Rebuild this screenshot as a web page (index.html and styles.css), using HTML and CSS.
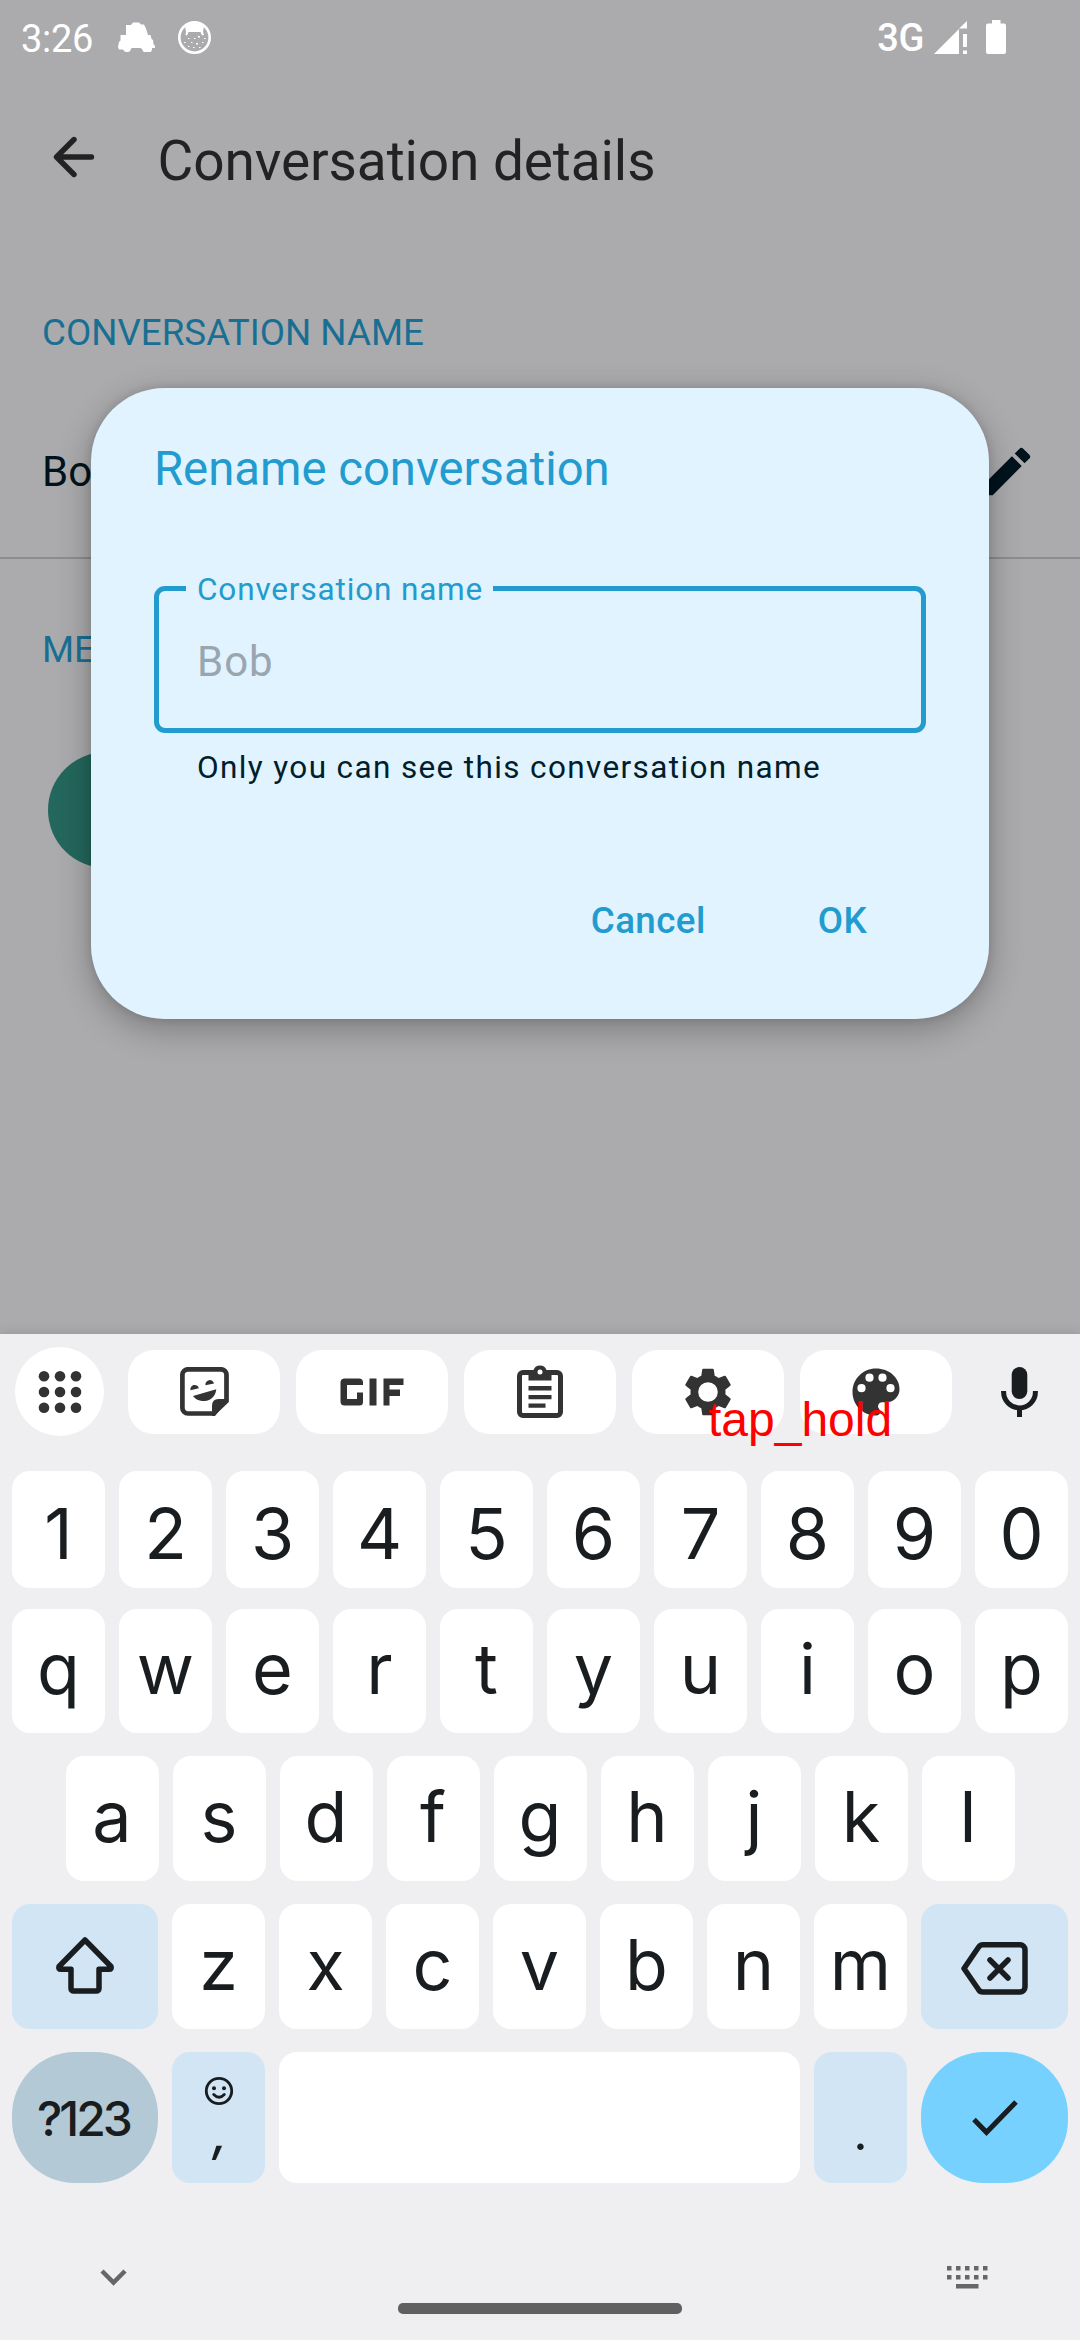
FILE: index.html
```html
<!DOCTYPE html>
<html lang="en">
<head>
<meta charset="utf-8">
<title>Conversation details</title>
<link rel="stylesheet" href="styles.css">
</head>
<body>
<div class="screen">
  <header class="status">
    <span class="clock">3:26</span>
    <svg class="car" viewBox="0 0 37 30"><path d="M8 3h5l2-2.500h6l2 2h3l2 4 2 6.500h2.500l1 4 1.500 1 .5 4 1.500 2v2h-3a4.800 4.800 0 0 1-9.500 1.500L22.500 26h-9L12 29a4.500 4.500 0 0 1-7-1.500H1L0 25l1-5 1.500-1.500V13H8z"/></svg>
    <svg class="face" viewBox="0 0 33 33"><circle cx="16.500" cy="16.500" r="15.200" fill="none" stroke="#fff" stroke-width="2.600"/><path d="M7 5C13 1 20 1 26 5l-1 6 1 3-2 .5-1.500-3.500H10.500L9 14.500 7.500 14 8 11z"/><path d="M10 17h1.500v1H10zM16 17h1.500v1H16zM20 15h2v1.500h-2zM26 17h1.500v1H26zM6 21h1.500v1H6zM13 21h1.500v1H13zM18 22h2v1.500h-2zM24 21h1.500v1H24zM10 25h1.500v1H10zM15 26h1.500v1H15zM21 26h1.500v1H21z"/></svg>
    <span class="network">3G</span>
    <svg class="signal" viewBox="0 0 33 33"><path d="M0 33 25 8v25zM25 7.500 33 0v7.500zM29 13h4v13h-4zM29 29.500h4V33h-4z"/></svg>
    <svg class="battery" viewBox="0 0 20 34"><path d="M6 0h8.500v3.500H18a2 2 0 0 1 2 2V32a2 2 0 0 1-2 2H2a2 2 0 0 1-2-2V5.500a2 2 0 0 1 2-2h4z"/></svg>
  </header>
  <div class="appbar">
    <svg class="back" viewBox="0 0 42 42"><path d="M38.500 21H4M21 3.500 3.500 21 21 38.500"/></svg>
    <h1>Conversation details</h1>
  </div>
  <main class="details">
    <h2>CONVERSATION NAME</h2>
    <div class="name-row">
      <span>Bo</span>
      <svg class="pencil" viewBox="0 0 24 24"><path d="M3 17.250V21h3.750L17.810 9.940l-3.750-3.750zM20.710 7.040a1 1 0 0 0 0-1.410l-2.340-2.340a1 1 0 0 0-1.410 0l-1.830 1.830 3.750 3.750z"/></svg>
    </div>
    <h2 class="members">ME</h2>
    <div class="avatar"></div>
  </main>

  <section class="dialog">
    <h3>Rename conversation</h3>
    <div class="field">
      <span class="label">Conversation name</span>
      <span class="hint">Bob</span>
    </div>
    <p class="helper">Only you can see this conversation name</p>
    <div class="actions"><span>Cancel</span><span>OK</span></div>
  </section>

  <section class="keyboard">
    <div class="toolbar">
      <div class="apps">
        <svg viewBox="0 0 44 44"><g><circle cx="6" cy="6.300" r="5.300"/><circle cx="22" cy="6.300" r="5.300"/><circle cx="38" cy="6.300" r="5.300"/><circle cx="6" cy="22" r="5.300"/><circle cx="22" cy="22" r="5.300"/><circle cx="38" cy="22" r="5.300"/><circle cx="6" cy="37.700" r="5.300"/><circle cx="22" cy="37.700" r="5.300"/><circle cx="38" cy="37.700" r="5.300"/></g></svg>
      </div>
      <div class="pill"><svg width="49" height="49" viewBox="0 0 49 49"><path d="M8 2.300h33a5.500 5.500 0 0 1 5.500 5.500V34L33.500 46.500H8A5.500 5.500 0 0 1 2.400 41V7.800A5.500 5.500 0 0 1 8 2.300z" fill="none" stroke="#333" stroke-width="4.700"/><path d="M48.500 32h-10q-6.500 0-6.500 7v10h3z"/><path d="M10.500 23.200a4.200 4.200 0 1 1 8.300-2zM25.500 18.300a4.300 4.300 0 1 1 8.500-1.700zM13 29l23.300-6.700C35.500 29 31 34 24.500 34 19 34 15 32 13 29z"/></svg></div>
      <div class="pill"><svg width="64" height="28" viewBox="0 0 64 28"><path d="M4 .5h15a4 4 0 0 1 4 4V7H7v14h10v-6.500h6V24a3.500 3.500 0 0 1-3.500 3.500h-15A4 4 0 0 1 .5 23.500v-19A4 4 0 0 1 4 .5zM29.500.5h7v27h-7zM43.500.5h20V7h-14v4.500h10.500v6.500H49.500v9.500h-6z"/></svg></div>
      <div class="pill clipboard"><svg width="46" height="54" viewBox="0 0 46 54"><rect x="2.500" y="8.500" width="41" height="43" rx="3.500" fill="none" stroke="#333" stroke-width="5"/><path d="M11.500 6h5a7 7 0 0 1 13 0h5v10.500h-23z"/><circle cx="23" cy="8" r="2.500" fill="#fff"/><path d="M11.500 22h23v4.400h-23zM11.500 31h23v4.200h-23zM11.500 39.500h17v4.300h-17z"/></svg></div>
      <div class="pill"><svg width="56" height="56" viewBox="0 0 24 24"><path fill-rule="evenodd" d="M19.430 12.980c.04-.32.070-.64.070-.98s-.03-.66-.07-.98l2.110-1.650a.5.500 0 0 0 .12-.64l-2-3.460a.5.500 0 0 0-.61-.22l-2.490 1a7.300 7.300 0 0 0-1.690-.98l-.38-2.650A.49.490 0 0 0 14 2h-4a.49.490 0 0 0-.49.420l-.38 2.650c-.61.250-1.170.59-1.690.98l-2.490-1a.49.490 0 0 0-.61.220l-2 3.460a.49.490 0 0 0 .12.640l2.110 1.650c-.04.320-.07.650-.07.980s.03.660.07.980l-2.110 1.650a.5.500 0 0 0-.12.640l2 3.460c.12.220.39.300.61.220l2.490-1c.52.400 1.080.73 1.690.98l.38 2.650c.03.240.24.420.49.420h4c.25 0 .46-.18.490-.42l.38-2.650a7.300 7.300 0 0 0 1.690-.98l2.490 1c.23.090.49 0 .61-.22l2-3.460a.5.500 0 0 0-.12-.64zM12 16.200a4.200 4.200 0 1 1 0-8.400 4.200 4.200 0 0 1 0 8.400z"/></svg></div>
      <div class="pill"><svg width="48" height="48" viewBox="0 0 48 48"><path fill-rule="evenodd" d="M24 .5C11 .5.500 11 .5 24S11 47.500 24 47.500a4 4 0 0 0 4-4c0-1.300-.5-2-1-2.700a4 4 0 0 1 3-6.600h4.700A13 13 0 0 0 47.500 21C47.500 9.500 37 .5 24 .5zM9.500 24.300a4.100 4.100 0 1 1 0-8.200 4.100 4.100 0 0 1 0 8.200zm8-10.500a4.100 4.100 0 1 1 0-8.200 4.100 4.100 0 0 1 0 8.200zm13 0a4.100 4.100 0 1 1 0-8.200 4.100 4.100 0 0 1 0 8.200zm8 10.500a4.100 4.100 0 1 1 0-8.200 4.100 4.100 0 0 1 0 8.200z"/></svg></div>
      <svg class="mic" viewBox="0 0 37 50"><rect x="10.700" y="0" width="15.600" height="32" rx="7.800"/><path d="M2.600 24v1a15.900 15.900 0 0 0 31.800 0v-1M18.500 40v10" fill="none" stroke="#191d1f" stroke-width="5"/></svg>
    </div>
    <span class="gesture">tap_hold</span>
    <div class="row digits"><b>1</b><b>2</b><b>3</b><b>4</b><b>5</b><b>6</b><b>7</b><b>8</b><b>9</b><b>0</b></div>
    <div class="row top"><b>q</b><b>w</b><b>e</b><b>r</b><b>t</b><b>y</b><b>u</b><b>i</b><b>o</b><b>p</b></div>
    <div class="row home"><b>a</b><b>s</b><b>d</b><b>f</b><b>g</b><b>h</b><b>j</b><b>k</b><b>l</b></div>
    <div class="row lower">
      <b class="mod"><svg class="shift" viewBox="0 0 60 58"><path d="M30 4 56 30.500Q57 33.300 54 33.300H44V52.500a2.500 2.500 0 0 1-2.500 2.500h-23a2.500 2.500 0 0 1-2.500-2.500V33.300H6Q3 33.300 4 30.500z"/></svg></b>
      <b>z</b><b>x</b><b>c</b><b>v</b><b>b</b><b>n</b><b>m</b>
      <b class="mod"><svg class="delete" viewBox="0 0 68 53"><path d="M22 2.800H59a5 5 0 0 1 5 5V45a5 5 0 0 1-5 5H22q-3 0-4.500-2.500L3 26.500 17.500 5.300Q19 2.800 22 2.800zM29 18l18 18M47 18 29 36"/></svg></b>
    </div>
    <div class="row bottom">
      <b class="symbols">?123</b>
      <b class="mod comma"><svg viewBox="0 0 30 30"><circle cx="15" cy="15" r="12.700"/><path d="M9.700 18.500q5.300 5.500 10.600 0"/><circle class="eye" cx="10" cy="12.300" r="2"/><circle class="eye" cx="20" cy="12.300" r="2"/></svg><i>,</i></b>
      <b class="space"></b>
      <b class="mod period"><i>.</i></b>
      <b class="enter"><svg viewBox="0 0 46 36"><path d="M2 19.500 14.500 32.300 44 2"/></svg></b>
    </div>
    <div class="nav">
      <svg class="chevron" viewBox="0 0 27 17"><path d="M2 2 13.500 13.500 25 2"/></svg>
      <div class="handle"></div>
      <svg class="switcher" viewBox="0 0 41 23"><path d="M0 0h4.500v4.500H0zM9 0h4.500v4.500H9zM18 0h4.500v4.500H18zM27 0h4.500v4.500H27zM36 0h4.500v4.500H36zM0 9h4.500v4.500H0zM9 9h4.500v4.500H9zM18 9h4.500v4.500H18zM27 9h4.500v4.500H27zM36 9h4.500v4.500H36zM9 18h22.500v4.500H9z"/></svg>
    </div>
  </section>
</div>
</body>
</html>
```
FILE: styles.css
```css
* { box-sizing: border-box; }
body { margin: 0; }
svg { display: block; flex: none; }
h1, h2, h3, p { margin: 0; font-weight: 400; }
.screen {
  position: relative;
  width: 1080px;
  height: 2340px;
  overflow: hidden;
  background: #ababad;
  font-family: Roboto, sans-serif;
  display: flex;
  flex-direction: column;
}

/* Status bar */
.status {
  height: 77px;
  padding: 0 74px 3px 21px;
  display: flex;
  align-items: center;
  color: #fff;
  fill: #fff;
  font-size: 38px;
  line-height: 44px;
}
.clock { width: 97px; padding-top: 4px; letter-spacing: -.3px; }
.car { width: 37px; height: 30px; }
.face { width: 33px; height: 33px; margin-left: 22.500px; }
.network { margin-left: auto; font-weight: 500; padding-top: 2px; letter-spacing: -.4px; }
.signal { width: 33px; height: 33px; margin-left: 10px; }
.battery { width: 20px; height: 34px; margin-left: 19px; }

/* App bar */
.appbar {
  height: 160px;
  padding-left: 53px;
  display: flex;
  align-items: center;
  color: #222;
}
.back { width: 42px; height: 42px; fill: none; stroke: #222; stroke-width: 5.400px; stroke-linecap: round; stroke-linejoin: round; }
.appbar h1 { font-size: 55px; line-height: 64px; padding-top: 8px; margin-left: 62.500px; letter-spacing: -.1px; }

/* Details page */
.details { height: 1097px; padding-top: 76px; }
.details h2 { font-size: 36.750px; line-height: 40px; padding-left: 42px; color: #196f93; }
.name-row {
  height: 206px;
  padding: 33px 42px 0;
  display: flex;
  justify-content: space-between;
  align-items: center;
  border-bottom: 2px solid #8d8d8f;
  color: #00131c;
  font-size: 42px;
}
.pencil { width: 63px; height: 63px; fill: #00131c; }
.details .members { margin-top: 71px; }
.avatar { width: 116px; height: 116px; margin: 82px 0 0 48px; border-radius: 50%; background: #24675c; }

/* Dialog */
.dialog {
  position: absolute;
  left: 91px;
  top: 388px;
  width: 898px;
  height: 631px;
  padding: 52px 63px 0;
  border-radius: 73.500px;
  background: #e0f3ff;
  box-shadow: 0 10px 34px rgba(0, 0, 0, .28), 0 0 10px rgba(0, 0, 0, .12);
  color: #229bce;
}
.dialog h3 { font-size: 47.250px; line-height: 58px; }
.field {
  position: relative;
  height: 147px;
  margin-top: 88px;
  padding: 42px 0 0 38px;
  border: 5px solid #229bce;
  border-radius: 11px;
}
.label {
  position: absolute;
  left: 27px;
  top: -20px;
  width: 307px;
  padding-left: 11px;
  background: #e0f3ff;
  font-size: 31.500px;
  line-height: 38px;
  letter-spacing: .85px;
  white-space: nowrap;
}
.hint { display: block; font-size: 42px; line-height: 58px; letter-spacing: 1px; color: #9aa6af; }
.helper { margin-top: 15px; padding-left: 43px; font-size: 31.500px; line-height: 40px; letter-spacing: 1.370px; color: #001e2b; white-space: nowrap; }
.actions {
  display: flex;
  justify-content: flex-end;
  gap: 112px;
  margin-top: 111px;
  padding-right: 59px;
  font-size: 36.750px;
  line-height: 44px;
  font-weight: 500;
  letter-spacing: .4px;
}

/* Keyboard */
.keyboard {
  position: relative;
  height: 1006px;
  background: #efeff1;
  box-shadow: 0 0 12px rgba(0, 0, 0, .14);
  padding-top: 13px;
  color: #191d1f;
  font-family: Inter, sans-serif;
}
.toolbar { display: flex; align-items: center; height: 89px; margin-bottom: 35px; padding-left: 15px; gap: 16px; fill: #333; }
.apps { width: 89px; height: 89px; margin-right: 8px; border-radius: 50%; background: #fff; display: grid; place-items: center; }
.apps svg { width: 44px; height: 44px; }
.pill { width: 152px; height: 84px; border-radius: 26px; background: #fff; display: grid; place-items: center; }
.clipboard { padding-bottom: 2px; }
.mic { width: 37px; height: 50px; margin-left: 33px; fill: #191d1f; }
.gesture {
  position: absolute;
  left: 708px;
  top: 58px;
  color: #f00;
  font: 48px/55px "Liberation Sans", sans-serif;
}
.row { display: grid; grid-template-columns: repeat(10, 93px); gap: 14px; margin-left: 12px; }
.row b {
  display: flex;
  align-items: center;
  justify-content: center;
  border-radius: 18px;
  background: #fff;
  font-weight: 400;
  font-size: 70px;
  line-height: 84px;
}
.digits { height: 117px; margin-bottom: 21px; }
.digits b { padding-top: 8px; }
.top { height: 124px; margin-bottom: 23px; }
.top b, .home b { padding-bottom: 4px; }
.home { height: 125px; margin: 0 0 23px 65.500px; }
.lower { height: 125px; margin-bottom: 23px; grid-template-columns: 146px repeat(7, 93px) 147px; }
.lower b { padding-bottom: 4px; }
.bottom { height: 131px; grid-template-columns: 146px 93px 521px 93px 147px; }
.row .mod { background: #d2e5f4; }
.shift { width: 60px; height: 58px; }
.delete { width: 68px; height: 53px; margin-top: 8px; }
.shift, .delete { fill: none; stroke: #191d1f; stroke-width: 5.500px; stroke-linecap: round; stroke-linejoin: round; }
.row .symbols { border-radius: 63px; background: #b4c9d6; font-size: 48px; font-weight: 500; letter-spacing: -3px; padding: 3px 3px 0 0; }
.row .comma, .row .period { flex-direction: column; justify-content: flex-start; }
.comma svg { width: 30px; height: 30px; margin-top: 24px; fill: none; stroke: #191d1f; stroke-width: 2.800px; stroke-linecap: round; }
.comma .eye { fill: #191d1f; stroke: none; }
.row i { font-style: normal; font-size: 50px; line-height: 60px; }
.row .comma i { margin-top: -3px; padding-left: 3px; font-style: italic; font-weight: 500; }
.period i { margin-top: 50px; }
.row .enter { border-radius: 63px; background: #76d1ff; }
.enter svg { width: 46px; height: 36px; fill: none; stroke: #191d1f; stroke-width: 5px; }
.nav { display: grid; grid-template-columns: 298px 284px 1fr; align-items: start; padding: 82px 92px 0 100px; }
.chevron { width: 27px; height: 17px; margin-top: 4px; fill: none; stroke: #666; stroke-width: 4.500px; }
.handle { height: 11px; margin-top: 38px; border-radius: 5px; background: #606060; }
.switcher { width: 41px; height: 23px; margin-top: 1px; justify-self: end; fill: #666; }
```
